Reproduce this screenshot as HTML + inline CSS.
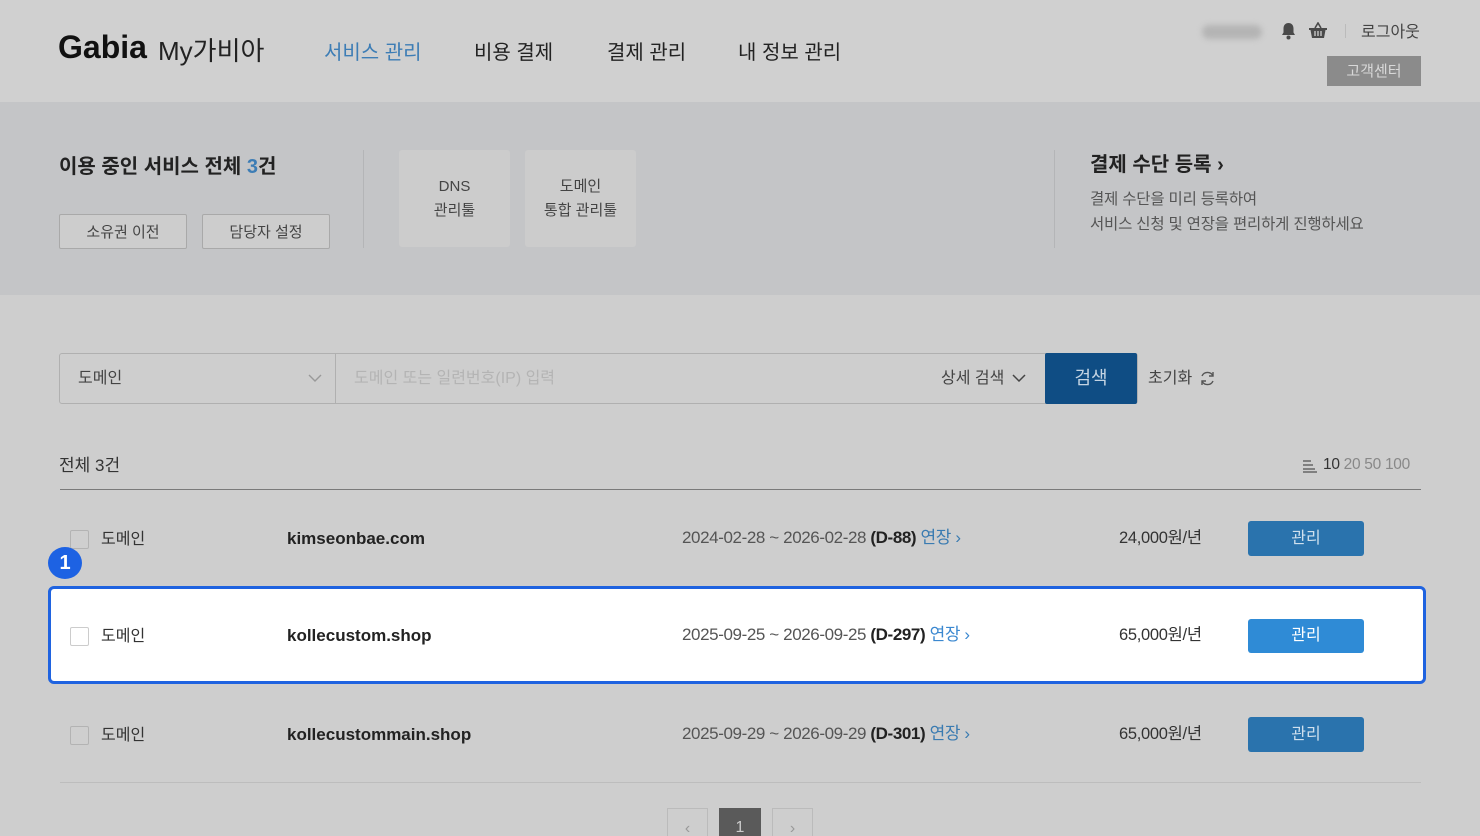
<!DOCTYPE html>
<html><head><meta charset="utf-8"><style>
*{margin:0;padding:0;box-sizing:border-box}
html,body{width:1480px;height:836px;overflow:hidden}
body{background:#cecece;font-family:"Liberation Sans","Noto Sans CJK KR",sans-serif;color:#333;position:relative;line-height:1.2}
.a{position:absolute;white-space:nowrap}
.btn{position:absolute;border:1px solid #a9a9a9;border-radius:2px;background:#cdcdcd;font-size:15px;color:#444;text-align:center}
.tool{position:absolute;top:150px;width:111px;height:97px;background:#cccccc;border-radius:3px;font-size:15px;color:#444;text-align:center;line-height:24px;padding-top:25px}
.cb{position:absolute;left:70px;width:19px;height:19px;border:1px solid #b3b3b3;border-radius:2px;background:#cfcfcf}
.mg{position:absolute;left:1248px;width:116px;height:35px;background:#2a73ad;border-radius:3px;color:#cfe0ee;text-align:center;line-height:35px;font-size:16px}
.dt{position:absolute;left:682px;font-size:17px;color:#555;letter-spacing:-0.4px}
.dt b{color:#222}.dt span{color:#3a7bb1}
.pr{position:absolute;left:1119px;font-size:16.5px;color:#333;letter-spacing:-0.3px}
</style></head><body>
<div class="a" style="left:0;top:0;width:1480px;height:102px;background:#d0d0d0"></div>
<div class="a" style="left:58px;top:28px;font-size:32px;font-weight:bold;color:#111">Gabia</div>
<div class="a" style="left:158px;top:36px;font-size:26px;color:#222">My가비아</div>
<div class="a" style="left:324px;top:41px;font-size:20px;color:#3d7db5">서비스 관리</div>
<div class="a" style="left:474px;top:41px;font-size:20px;color:#222">비용 결제</div>
<div class="a" style="left:607px;top:41px;font-size:20px;color:#222">결제 관리</div>
<div class="a" style="left:738px;top:41px;font-size:20px;color:#222">내 정보 관리</div>
<div class="a" style="left:1202px;top:25px;width:60px;height:14px;background:#b4b4b4;border-radius:7px;filter:blur(3px)"></div>
<svg class="a" style="left:1280px;top:22px" width="17" height="18" viewBox="0 0 17 18"><path d="M8.5 1c-3 0-5 2.2-5 5.5v4L2 13h13l-1.5-2.5v-4C13.5 3.2 11.5 1 8.5 1z" fill="#4a4a4a"/><circle cx="8.5" cy="15.5" r="2" fill="#4a4a4a"/></svg>
<svg class="a" style="left:1308px;top:22px" width="20" height="17" viewBox="0 0 20 17"><path d="M7 6L10 1l3 5" stroke="#4a4a4a" stroke-width="1.6" fill="none"/><path d="M1 6h18v2h-1.5l-1.5 8H4L2.5 8H1z" fill="#4a4a4a"/><path d="M7 9v5M10 9v5M13 9v5" stroke="#d0d0d0" stroke-width="1.3"/></svg>
<div class="a" style="left:1345px;top:24px;width:1px;height:14px;background:#bbb"></div>
<div class="a" style="left:1361px;top:23px;font-size:16px;color:#444">로그아웃</div>
<div class="a" style="left:1327px;top:56px;width:94px;height:30px;background:#8b8b8b;color:#d8d8d8;font-size:15px;text-align:center;line-height:31px">고객센터</div>

<div class="a" style="left:0;top:102px;width:1480px;height:193px;background:#c4c5c7"></div>
<div class="a" style="left:59px;top:155px;font-size:20px;font-weight:bold;color:#222">이용 중인 서비스 전체 <span style="color:#3d7db5">3</span>건</div>
<div class="btn" style="left:59px;top:214px;width:128px;height:35px;line-height:36px">소유권 이전</div>
<div class="btn" style="left:202px;top:214px;width:128px;height:35px;line-height:36px">담당자 설정</div>
<div class="a" style="left:363px;top:150px;width:1px;height:98px;background:#b4b5b7"></div>
<div class="tool" style="left:399px">DNS<br>관리툴</div>
<div class="tool" style="left:525px">도메인<br>통합 관리툴</div>
<div class="a" style="left:1054px;top:150px;width:1px;height:98px;background:#b4b5b7"></div>
<div class="a" style="left:1090px;top:153px;font-size:20px;font-weight:bold;color:#222">결제 수단 등록 ›</div>
<div class="a" style="left:1090px;top:187px;font-size:15.5px;color:#555;line-height:25px;letter-spacing:-0.2px">결제 수단을 미리 등록하여<br>서비스 신청 및 연장을 편리하게 진행하세요</div>

<div class="a" style="left:59px;top:353px;width:1079px;height:51px;border:1px solid #b0b0b0;border-radius:3px"></div>
<div class="a" style="left:335px;top:353px;width:1px;height:51px;background:#b0b0b0"></div>
<div class="a" style="left:78px;top:369px;font-size:16px;color:#444">도메인</div>
<svg class="a" style="left:308px;top:374px" width="14" height="9"><path d="M1 1l6 6 6-6" stroke="#999" stroke-width="1.4" fill="none"/></svg>
<div class="a" style="left:354px;top:369px;font-size:16px;color:#b4b4b4">도메인 또는 일련번호(IP) 입력</div>
<div class="a" style="left:941px;top:369px;font-size:16px;color:#444">상세 검색</div>
<svg class="a" style="left:1012px;top:374px" width="14" height="9"><path d="M1 1l6 6 6-6" stroke="#444" stroke-width="1.5" fill="none"/></svg>
<div class="a" style="left:1045px;top:353px;width:92px;height:51px;background:#0f4d84;border-radius:2px;color:#c4d4e3;font-size:18px;text-align:center;line-height:51px">검색</div>
<div class="a" style="left:1148px;top:369px;font-size:16px;color:#444">초기화</div>
<svg class="a" style="left:1199px;top:370px" width="17" height="17" viewBox="0 0 17 17"><path d="M14 6A6 6 0 0 0 3 6M3 11a6 6 0 0 0 11 0" stroke="#555" stroke-width="1.4" fill="none"/><path d="M14 2v4h-4M3 15v-4h4" stroke="#555" stroke-width="1.4" fill="none"/></svg>

<div class="a" style="left:59px;top:456px;font-size:17px;color:#333">전체 3건</div>
<svg class="a" style="left:1303px;top:460px" width="14" height="13"><path d="M0 1h8M0 5h10M0 9h12M0 12h14" stroke="#666" stroke-width="1.4"/></svg>
<div class="a" style="left:1323px;top:456px;font-size:15.5px;color:#888;letter-spacing:-0.3px"><span style="color:#333">10</span> 20 50 100</div>
<div class="a" style="left:60px;top:489px;width:1361px;height:1px;background:#7a7a7a"></div>

<div class="cb" style="top:530px"></div>
<div class="a" style="left:101px;top:530px;font-size:16px;color:#333">도메인</div>
<div class="a" style="left:287px;top:529px;font-size:17px;font-weight:bold;color:#222">kimseonbae.com</div>
<div class="dt" style="top:528px">2024-02-28 ~ 2026-02-28 <b>(D-88)</b> <span>연장 ›</span></div>
<div class="pr" style="top:529px">24,000원/년</div>
<div class="mg" style="top:521px">관리</div>

<div class="a" style="left:48px;top:586px;width:1378px;height:98px;background:#fff;border:3px solid #1f63e0;border-radius:6px"></div>
<div class="a" style="left:48px;top:547px;width:34px;height:32px;border-radius:50%;background:#1d62e3;color:#fff;font-weight:bold;font-size:20px;text-align:center;line-height:32px">1</div>
<div class="cb" style="top:627px;border-color:#ccc;background:#fff"></div>
<div class="a" style="left:101px;top:627px;font-size:16px;color:#333">도메인</div>
<div class="a" style="left:287px;top:626px;font-size:17px;font-weight:bold;color:#222">kollecustom.shop</div>
<div class="dt" style="top:625px">2025-09-25 ~ 2026-09-25 <b>(D-297)</b> <span style="color:#3b88d0">연장 ›</span></div>
<div class="pr" style="top:626px">65,000원/년</div>
<div class="mg" style="top:619px;background:#2f8bd6;color:#fff;height:34px;line-height:34px">관리</div>

<div class="cb" style="top:726px"></div>
<div class="a" style="left:101px;top:726px;font-size:16px;color:#333">도메인</div>
<div class="a" style="left:287px;top:725px;font-size:17px;font-weight:bold;color:#222">kollecustommain.shop</div>
<div class="dt" style="top:724px">2025-09-29 ~ 2026-09-29 <b>(D-301)</b> <span>연장 ›</span></div>
<div class="pr" style="top:725px">65,000원/년</div>
<div class="mg" style="top:717px">관리</div>

<div class="a" style="left:60px;top:782px;width:1361px;height:1px;background:#bdbdbd"></div>
<div class="a" style="left:667px;top:808px;width:41px;height:40px;border:1px solid #bbb;color:#999;text-align:center;line-height:40px">‹</div>
<div class="a" style="left:719px;top:808px;width:42px;height:40px;background:#5a5a5a;color:#ccc;text-align:center;line-height:40px;font-size:16px">1</div>
<div class="a" style="left:772px;top:808px;width:41px;height:40px;border:1px solid #bbb;color:#999;text-align:center;line-height:40px">›</div>
</body></html>
